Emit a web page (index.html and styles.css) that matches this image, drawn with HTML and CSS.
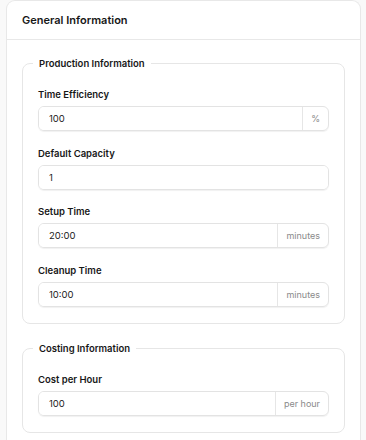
FILE: index.html
```html
<!DOCTYPE html>
<html lang="en">
<head>
    <meta charset="UTF-8">
    <meta name="viewport" content="width=device-width, initial-scale=1.0">
    <title>General Information</title>
    <link rel="stylesheet" href="styles.css">
</head>
<body>
    <div class="card">
        <div class="card-header">General Information</div>
        <div class="card-body">
            <fieldset class="group">
                <legend>Production Information</legend>
                <div class="field">
                    <label>Time Efficiency</label>
                    <div class="input-wrap">
                        <input type="text" value="100">
                        <span class="addon">%</span>
                    </div>
                </div>
                <div class="field">
                    <label>Default Capacity</label>
                    <div class="input-wrap">
                        <input type="text" value="1">
                    </div>
                </div>
                <div class="field">
                    <label>Setup Time</label>
                    <div class="input-wrap">
                        <input type="text" value="20:00">
                        <span class="addon">minutes</span>
                    </div>
                </div>
                <div class="field">
                    <label>Cleanup Time</label>
                    <div class="input-wrap">
                        <input type="text" value="10:00">
                        <span class="addon">minutes</span>
                    </div>
                </div>
            </fieldset>
            <fieldset class="group">
                <legend>Costing Information</legend>
                <div class="field">
                    <label>Cost per Hour</label>
                    <div class="input-wrap">
                        <input type="text" value="100">
                        <span class="addon">per hour</span>
                    </div>
                </div>
            </fieldset>
        </div>
    </div>
</body>
</html>
```

FILE: styles.css
```css
body {
    font-family: Inter, 'Noto Sans', sans-serif;
    background-color: #f9f9f9;
    margin: 0;
    padding: 0 5px 0 6px;
    color: #171717;
}
.card {
    background-color: #fff;
    border: 1px solid #e8e8e8;
    border-bottom: none;
    border-radius: 9px 9px 0 0;
    min-height: 460px;
}
.card-header {
    font-size: 11px;
    font-weight: 600;
    padding: 12px 15px 0;
    height: 26px;
    border-bottom: 1px solid #e8e8e8;
}
.card-body {
    padding: 18px 15px;
    display: flex;
    flex-direction: column;
    gap: 19px;
}
.group {
    margin: 0;
    border: 1px solid #e6e6e6;
    border-radius: 8px;
    padding: 20px 15px 16px;
    display: flex;
    flex-direction: column;
    gap: 16.5px;
}
legend {
    font-size: 9.5px;
    font-weight: 600;
    padding: 0 6px;
    margin-left: -5px;
}
.field {
    display: flex;
    flex-direction: column;
    gap: 5px;
}
label {
    font-size: 9.5px;
    font-weight: 600;
    line-height: 12px;
}
.input-wrap {
    display: flex;
    height: 23px;
    border: 1px solid #e3e3e3;
    border-radius: 6px;
    box-shadow: 0 1px 1px rgba(0, 0, 0, 0.06);
    overflow: hidden;
}
input {
    flex: 1;
    min-width: 0;
    border: none;
    outline: none;
    padding: 0 10px;
    font-family: inherit;
    font-size: 9.5px;
    color: #222;
}
.addon {
    display: flex;
    align-items: center;
    padding: 0 8px;
    border-left: 1px solid #e6e6e6;
    font-size: 9px;
    color: #8a8a8a;
}
```
